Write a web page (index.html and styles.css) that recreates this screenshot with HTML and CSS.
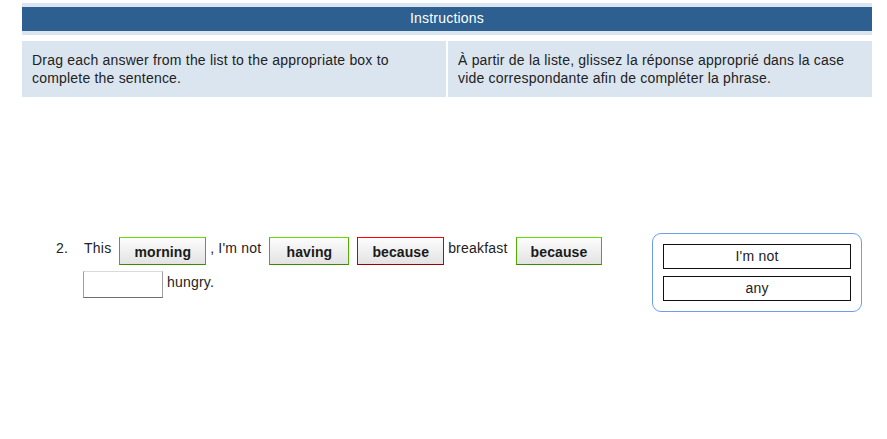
FILE: index.html
```html
<!DOCTYPE html>
<html>
<head>
<meta charset="utf-8">
<link rel="stylesheet" href="styles.css">
</head>
<body>
<div class="page">
  <div class="header">Instructions</div>
  <div class="instructions">
    <div class="cell">Drag each answer from the list to the appropriate box to complete the sentence.</div>
    <div class="cell">À partir de la liste, glissez la réponse approprié dans la case vide correspondante afin de compléter la phrase.</div>
  </div>
  <div class="question-row">
    <div class="question">
      <div class="num">2.</div>
      <div class="sentence">&nbsp;This <span class="box ok">morning</span>, I'm not <span class="box ok">having</span><span class="box bad">because</span>breakfast <span class="box ok">because</span> <span class="box empty"></span>hungry.</div>
    </div>
    <div class="answers">
      <div class="answer">I'm not</div>
      <div class="answer">any</div>
    </div>
  </div>
</div>
</body>
</html>
```
FILE: styles.css
```css
body {
  margin: 0;
  background: #ffffff;
  font-family: "Liberation Sans", Arial, sans-serif;
  font-size: 14px;
  letter-spacing: 0.2px;
  color: #222222;
}

.page {
  width: 850px;
  margin-left: 22px;
  padding-top: 3px;
}

.header {
  background: #2d5f90;
  border-top: 4px solid #dbe5f0;
  border-bottom: 4px solid #dbe5f0;
  color: #ffffff;
  text-align: center;
  height: 24px;
  line-height: 23px;
}

.instructions {
  display: grid;
  grid-template-columns: 1fr 1fr;
  column-gap: 2px;
  margin-top: 6px;
}

.cell {
  background: #dbe5f0;
  padding: 10px 10px;
  line-height: 18px;
  height: 36px;
}

.question-row {
  display: flex;
  align-items: flex-start;
  margin-top: 136px;
}

.question {
  display: flex;
  padding-top: 1px;
  padding-left: 34px;
  width: 596px;
}

.num {
  width: 24px;
  flex: none;
  line-height: 29px;
}

.sentence {
  flex: 1;
  line-height: 29px;
  color: #222222;
}

.box {
  display: inline-block;
  box-sizing: border-box;
  min-width: 80px;
  height: 28px;
  margin: 3px 4px;
  padding: 0 14px;
  vertical-align: top;
  line-height: 28px;
  text-align: center;
  font-weight: bold;
  letter-spacing: 0.1px;
  color: #1a1a1a;
  background: linear-gradient(#fcfcfc, #e3e3e3);
  border: 1px solid #999999;
}

.box.ok {
  border-color: #66dd00 #4fb000 #3a8a00 #4fb000;
}

.box.bad {
  border-color: #ff0000 #cc0000 #990000 #cc0000;
}

.box.empty {
  background: #ffffff;
  border-color: #dadada #a0a0a0 #6e6e6e #a0a0a0;
  height: 27px;
  margin-left: 3px;
}

.answers {
  margin-left: auto;
  margin-right: 10px;
  width: 210px;
  box-sizing: border-box;
  border: 1px solid #6f9ded;
  border-radius: 9px;
  padding: 10px 10px;
  display: flex;
  flex-direction: column;
  gap: 7px;
}

.answer {
  border: 1px solid #111111;
  height: 23px;
  line-height: 23px;
  text-align: center;
  color: #222222;
}
```
